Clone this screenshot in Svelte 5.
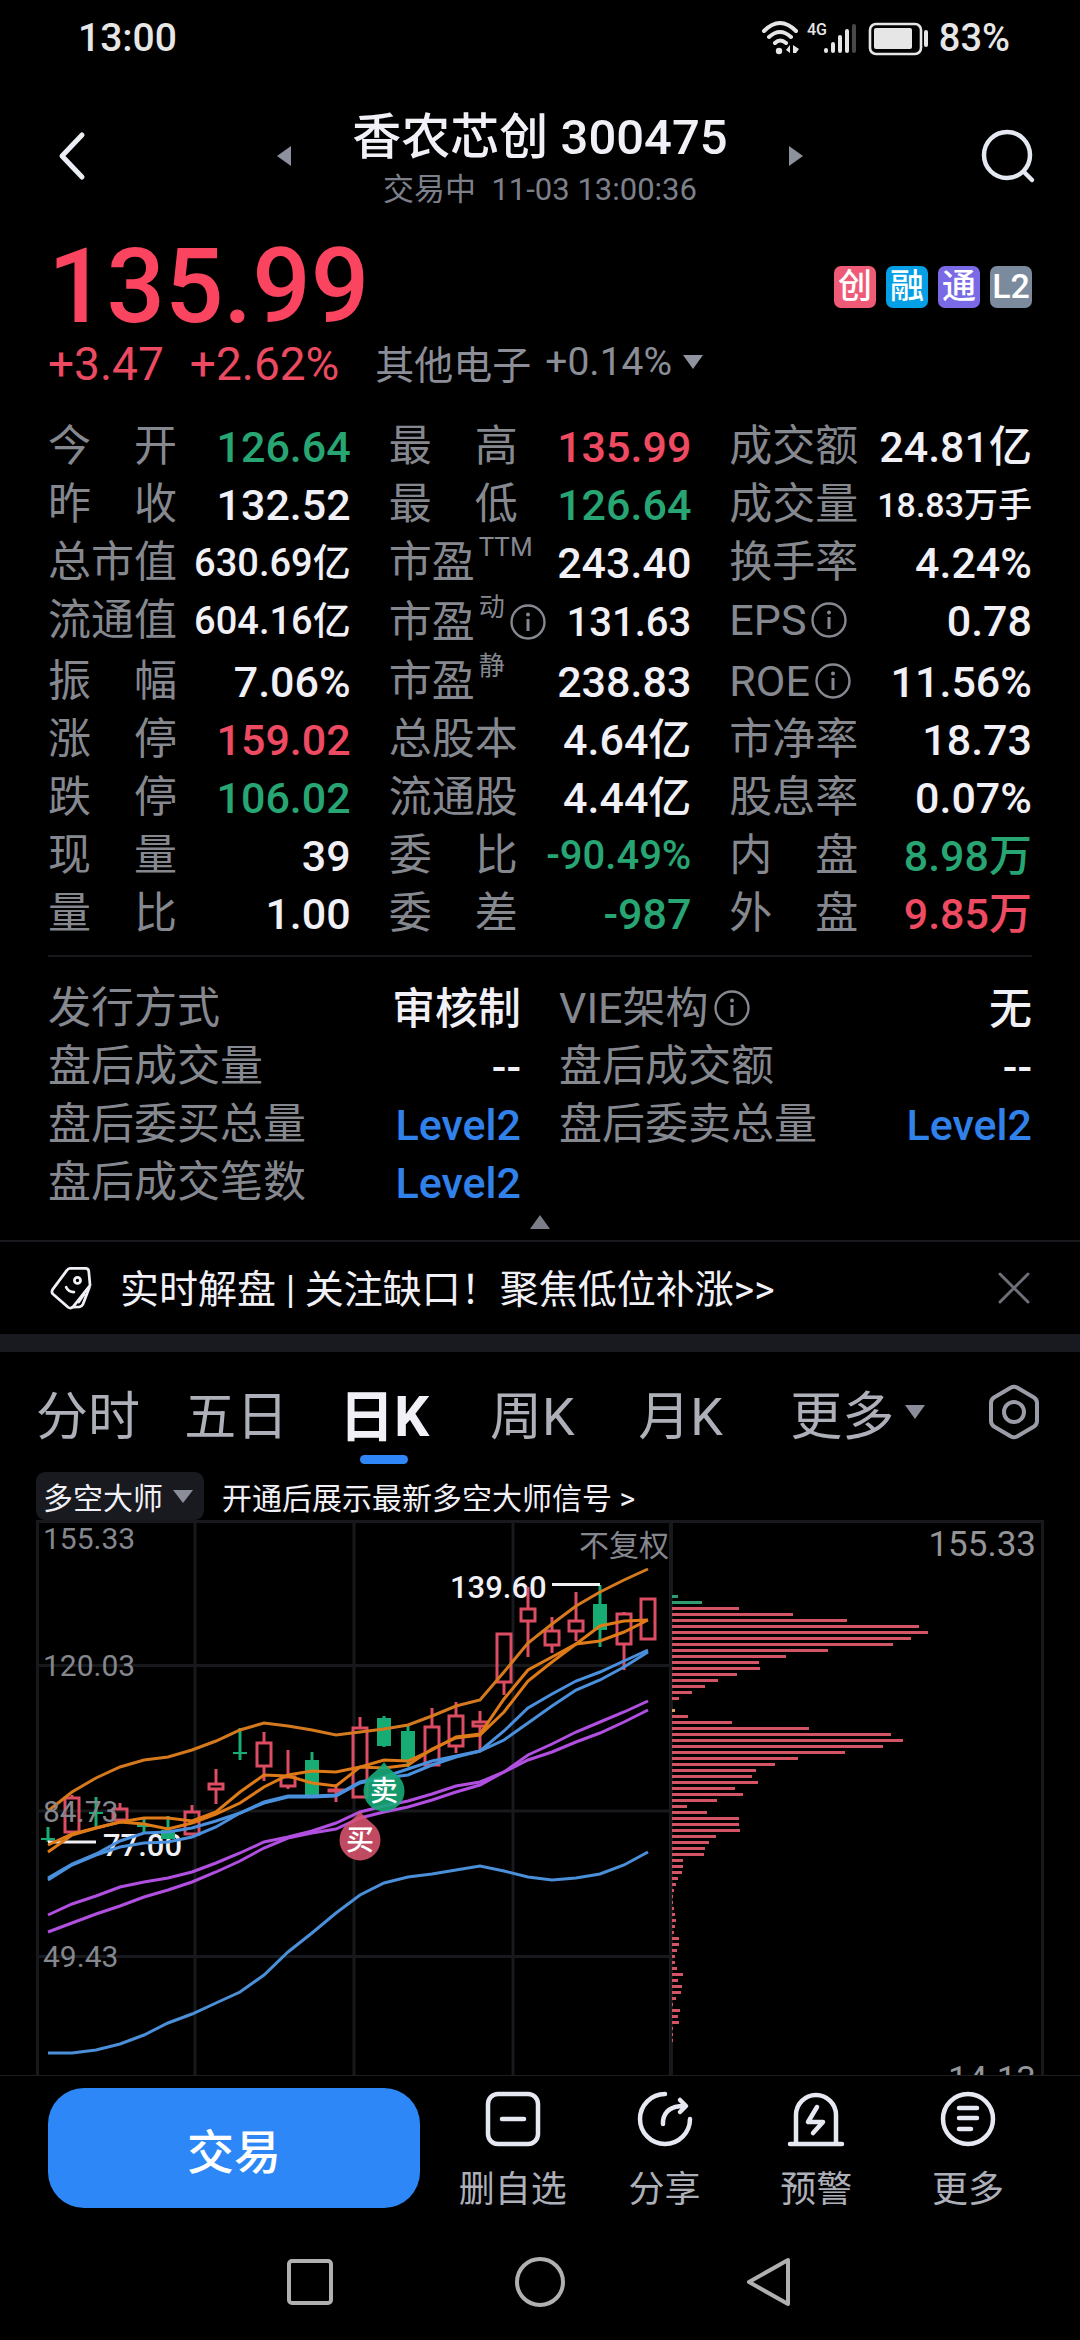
<script lang="ts">
    type Stat = {
        label: string;
        value: string;
        tone?: "up" | "down" | "link";
        size?: "md" | "sm" | "xs";
        sup?: string;
        info?: boolean;
    };

    const stats: Stat[] = [
        {label: "今 开", value: "126.64", tone: "down"},
        {label: "最 高", value: "135.99", tone: "up"},
        {label: "成交额", value: "24.81亿"},
        {label: "昨 收", value: "132.52"},
        {label: "最 低", value: "126.64", tone: "down"},
        {label: "成交量", value: "18.83万手", size: "xs"},
        {label: "总市值", value: "630.69亿", size: "sm"},
        {label: "市盈", sup: "TTM", value: "243.40"},
        {label: "换手率", value: "4.24%"},
        {label: "流通值", value: "604.16亿", size: "sm"},
        {label: "市盈", sup: "动", info: true, value: "131.63", size: "md"},
        {label: "EPS", info: true, value: "0.78"},
        {label: "振 幅", value: "7.06%"},
        {label: "市盈", sup: "静", value: "238.83"},
        {label: "ROE", info: true, value: "11.56%"},
        {label: "涨 停", value: "159.02", tone: "up"},
        {label: "总股本", value: "4.64亿"},
        {label: "市净率", value: "18.73"},
        {label: "跌 停", value: "106.02", tone: "down"},
        {label: "流通股", value: "4.44亿"},
        {label: "股息率", value: "0.07%"},
        {label: "现 量", value: "39"},
        {label: "委 比", value: "-90.49%", tone: "down", size: "md"},
        {label: "内 盘", value: "8.98万", tone: "down"},
        {label: "量 比", value: "1.00"},
        {label: "委 差", value: "-987", tone: "down"},
        {label: "外 盘", value: "9.85万", tone: "up"}
    ];

    const extras: Stat[] = [
        {label: "发行方式", value: "审核制"},
        {label: "VIE架构", info: true, value: "无"},
        {label: "盘后成交量", value: "--"},
        {label: "盘后成交额", value: "--"},
        {label: "盘后委买总量", value: "Level2", tone: "link"},
        {label: "盘后委卖总量", value: "Level2", tone: "link"},
        {label: "盘后成交笔数", value: "Level2", tone: "link"}
    ];

    const badges = [
        {text: "创", color: "red"},
        {text: "融", color: "cyan"},
        {text: "通", color: "violet"},
        {text: "L2", color: "slate"}
    ];

    const tabs = ["分时", "五日", "日K", "周K", "月K"];
    let activeTab = "日K";

    // [high, body top, body bottom, low, rising]
    const candles: [number, number, number, number, boolean][] = [
        [328, 339, 341, 343, false],
        [296, 299, 333, 333, true],
        [298, 313, 315, 328, false],
        [304, 310, 321, 323, true],
        [319, 326, 328, 333, false],
        [317, 331, 340, 340, false],
        [306, 313, 335, 335, true],
        [270, 285, 290, 305, true],
        [229, 253, 255, 261, false],
        [233, 244, 267, 282, true],
        [251, 278, 287, 290, true],
        [253, 261, 297, 297, false],
        [285, 291, 292, 303, true],
        [218, 229, 298, 298, true],
        [217, 219, 247, 248, false],
        [226, 232, 261, 268, false],
        [209, 228, 266, 266, true],
        [203, 217, 247, 254, true],
        [212, 223, 227, 252, true],
        [135, 135, 183, 196, true],
        [88, 110, 122, 158, true],
        [118, 132, 146, 154, true],
        [93, 122, 132, 142, true],
        [86, 105, 131, 148, false],
        [113, 115, 145, 171, true],
        [100, 100, 140, 140, true]
    ];

    const lines = [
        {color: "#d5791f", data: [312, 293, 279, 268, 261, 258, 251, 242, 231, 224, 227, 231, 236, 233, 230, 226, 217, 207, 201, 173, 144, 125, 107, 93, 81, 70]},
        {color: "#de7a18", data: [346, 335, 329, 323, 319, 319, 322, 313, 293, 276, 277, 284, 287, 268, 261, 262, 251, 238, 235, 200, 171, 158, 145, 142, 133, 121]},
        {color: "#de7a18", data: [353, 336, 329, 323, 325, 330, 324, 315, 304, 288, 276, 272, 273, 268, 269, 266, 250, 239, 236, 213, 182, 163, 145, 127, 122, 121]},
        {color: "#4a90dc", data: [379, 365, 355, 342, 334, 333, 329, 322, 314, 303, 297, 297, 296, 283, 278, 270, 262, 257, 252, 232, 209, 195, 182, 173, 162, 151]},
        {color: "#4a90dc", data: [381, 366, 356, 348, 344, 343, 338, 328, 314, 304, 298, 298, 297, 284, 279, 276, 266, 258, 252, 241, 224, 207, 191, 181, 168, 153]},
        {color: "#b14fe0", data: [416, 405, 397, 388, 383, 379, 373, 364, 354, 343, 338, 332, 324, 313, 307, 302, 295, 287, 283, 273, 256, 245, 233, 223, 213, 202]},
        {color: "#b14fe0", data: [433, 424, 415, 407, 398, 391, 383, 373, 362, 349, 339, 334, 330, 319, 313, 308, 301, 293, 286, 273, 261, 253, 243, 234, 223, 211]},
        {color: "#4a8fd8", data: [554, 554, 551, 545, 536, 524, 515, 504, 493, 476, 453, 434, 414, 396, 384, 378, 375, 371, 367, 372, 378, 381, 379, 375, 366, 353]}
    ];

    // chips held at each price level, top to bottom
    const chips = [
        6, 30, 67, 121, 175, 247, 256, 239, 221, 156, 114, 87, 88, 65, 46, 33, 20, 7, 0, 3,
        16, 60, 137, 219, 231, 211, 173, 126, 103, 84, 80, 86, 63, 71, 45, 15, 35, 67, 67, 68,
        44, 37, 33, 32, 11, 11, 10, 6, 4, 2, 1, 1, 2, 3, 4, 3, 2, 7, 7, 5,
        3, 3, 5, 11, 6, 10, 9, 4, 1, 8, 6, 7, 1, 1, 1
    ];

    const x = (i: number) => 48 + i * 24;
    const points = (data: number[]) => data.map((y, i) => `${x(i)},${y}`).join(" ");
    const chipColor = (i: number) => i < 2 ? "#2f9d72" : i === 19 ? "#dca368" : "#d25465";
</script>

{#snippet infoIcon()}
    <svg class="info" viewBox="0 0 36 36" aria-hidden="true">
        <circle cx="18" cy="18" r="16.5" fill="none" stroke="currentColor" stroke-width="2.4"/>
        <circle cx="18" cy="10.5" r="2" fill="currentColor"/>
        <path d="M18 15v12" stroke="currentColor" stroke-width="3"/>
    </svg>
{/snippet}

{#snippet statRow(item: Stat)}
    <div class="stat" class:tall={item.sup === "动"}>
        <dt>
            <span class:spread={item.label.includes(" ")}>{item.label}</span>
            {#if item.sup}<sup>{item.sup}</sup>{/if}
            {#if item.info}{@render infoIcon()}{/if}
        </dt>
        <dd class="{item.tone ?? ''} {item.size ?? ''}">
            {#if item.tone === "link"}<a href="#level2">{item.value}</a>{:else}{item.value}{/if}
        </dd>
    </div>
{/snippet}

<div class="page">
    <div class="status">
        <span class="clock">13:00</span>
        <svg class="signals" viewBox="0 0 170 36" aria-hidden="true">
            <g fill="none" stroke="#e6e6e6" stroke-width="4" stroke-linecap="round">
                <path d="M3 11Q19 -5 35 11M8 17Q19 7 30 17M14 23Q19 18 25 23"/>
            </g>
            <circle cx="18" cy="31" r="3.2" fill="#e6e6e6"/>
            <path d="M29 25v8l-4-3zM32 25l6 4-3 4h-3z" fill="#e6e6e6"/>
            <text x="46" y="15" font-size="16" font-weight="500" fill="#e6e6e6">4G</text>
            <g stroke="#e6e6e6" stroke-width="4" stroke-linecap="round">
                <path d="M65 30v1M72 24v7M79 17v14M86 11v20"/>
                <path d="M93 6v25" stroke="#484848"/>
            </g>
            <rect x="109" y="4" width="51" height="30" rx="6" fill="none" stroke="#e6e6e6" stroke-width="2.6"/>
            <rect x="113" y="8" width="38" height="21" rx="2" fill="#e6e6e6"/>
            <path d="M165 12v13" stroke="#e6e6e6" stroke-width="4" stroke-linecap="round"/>
        </svg>
        <span class="battery">83%</span>
    </div>

    <header>
        <button class="icon" aria-label="返回">
            <svg width="30" height="52" viewBox="0 0 30 52">
                <path d="M25 5L5 26l20 21" fill="none" stroke="#eceef5" stroke-width="5" stroke-linecap="round" stroke-linejoin="round"/>
            </svg>
        </button>
        <div class="switcher">
            <button aria-label="上一只">
                <svg width="16" height="22" viewBox="0 0 16 22"><path d="M15 1v20L1 11z" fill="#8d919d"/></svg>
            </button>
            <div class="title">
                <h1>香农芯创 300475</h1>
                <p>交易中&nbsp; 11-03 13:00:36</p>
            </div>
            <button aria-label="下一只">
                <svg width="16" height="22" viewBox="0 0 16 22"><path d="M1 1v20l14-10z" fill="#8d919d"/></svg>
            </button>
        </div>
        <button class="icon" aria-label="搜索">
            <svg width="56" height="56" viewBox="0 0 56 56" fill="none" stroke="#e4e8f1" stroke-width="4.5" stroke-linecap="round">
                <circle cx="27" cy="27" r="23"/>
                <path d="M44 44l8 8"/>
            </svg>
        </button>
    </header>

    <section class="quote">
        <div class="price-line">
            <strong>135.99</strong>
            <div class="badges">
                {#each badges as badge}
                    <span class="badge {badge.color}">{badge.text}</span>
                {/each}
            </div>
        </div>
        <div class="change-line">
            <span class="change">+3.47</span>
            <span class="change">+2.62%</span>
            <button class="sector">
                其他电子 <span>+0.14%</span>
                <svg width="22" height="16" viewBox="0 0 22 16"><path d="M1 1h20L11 15z" fill="#9094a0"/></svg>
            </button>
        </div>
        <dl class="stats">
            {#each stats as item}
                {@render statRow(item)}
            {/each}
        </dl>
        <dl class="stats extras">
            {#each extras as item}
                {@render statRow(item)}
            {/each}
        </dl>
        <button class="fold" aria-label="收起">
            <svg width="22" height="16" viewBox="0 0 22 16"><path d="M11 1l10 14H1z" fill="#7b7e88"/></svg>
        </button>
    </section>

    <aside class="notice">
        <svg width="42" height="45" viewBox="60 48 130 136" fill="none" stroke="#f0f0f6" stroke-width="8.5" stroke-linecap="round" stroke-linejoin="round">
            <path d="M122 54H170Q179 54 180 63L184 106L132 172Q124 180 116 174L69 133Q63 126 69 118L112 60Q116 54 122 54Z"/>
            <path d="M182 112L162 165Q159 172 151 173L132 174M165 134L149 158"/>
            <circle cx="145" cy="91" r="9.5"/>
            <path d="M110 112Q117 127 134 127"/>
        </svg>
        <a href="#notice">实时解盘 | 关注缺口！聚焦低位补涨&gt;&gt;</a>
        <button class="close" aria-label="关闭">
            <svg width="32" height="32" viewBox="0 0 32 32"><path d="M2 2l28 28M30 2L2 30" stroke="#6d6f78" stroke-width="3" stroke-linecap="round"/></svg>
        </button>
    </aside>

    <nav class="tabs">
        {#each tabs as tab}
            <button class:active={activeTab === tab} on:click={() => (activeTab = tab)}>{tab}</button>
        {/each}
        <button class="more">
            更多
            <svg width="22" height="16" viewBox="0 0 22 16"><path d="M1 1h20L11 15z" fill="#8b8e98"/></svg>
        </button>
        <button class="settings" aria-label="设置">
            <svg width="52" height="56" viewBox="0 0 52 56" fill="none" stroke="#9a9da7" stroke-width="4" stroke-linejoin="round">
                <path d="M23 3.500Q26 2 29 3.500L46 13.500Q49 15.500 49 19V37Q49 40.500 46 42.500L29 52.500Q26 54 23 52.500L6 42.500Q3 40.500 3 37V19Q3 15.500 6 13.500Z"/>
                <circle cx="26" cy="28" r="10"/>
            </svg>
        </button>
    </nav>

    <div class="indicator">
        <button class="chip">
            多空大师
            <svg width="22" height="15" viewBox="0 0 22 15"><path d="M1 1h20L11 14z" fill="#8b8e98"/></svg>
        </button>
        <a href="#signal">开通后展示最新多空大师信号 &gt;</a>
    </div>

    <svg class="chart" viewBox="0 21 1080 555" role="img" aria-label="日K线图">
        <g stroke="#18191d" stroke-width="3" fill="none">
            <path d="M36 22.500H1044M37.500 21V580M195 21V580M354 21V580M513 21V580M1042.500 21V580"/>
            <path d="M36 166.500H671M36 312H671M36 457.500H671"/>
            <path d="M671 21V580" stroke-width="4"/>
        </g>

        <text class="peak" x="450" y="99">139.60</text>
        <text class="peak" x="103" y="357">77.00</text>

        {#each candles as [high, top, bottom, low, rising], i}
            {#if rising}
                <path d="M{x(i)} {high}V{top}M{x(i)} {bottom}V{low}" stroke="#dc4d63" stroke-width="3"/>
                <rect x={x(i) - 7} y={top} width="14" height={bottom - top} fill="none" stroke="#dc4d63" stroke-width="3"/>
            {:else}
                <path d="M{x(i)} {high}V{low}" stroke="#17ac73" stroke-width="3"/>
                <rect x={x(i) - 7} y={top} width="14" height={bottom - top} fill="#17ac73"/>
            {/if}
        {/each}

        <path d="M48 343H96M552 85.500H600" stroke="#f0f0f5" stroke-width="3"/>

        {#each lines as line}
            <polyline points={points(line.data)} fill="none" stroke={line.color} stroke-width="3"/>
        {/each}

        <g class="scale">
            <text x="43" y="50">155.33</text>
            <text x="43" y="177">120.03</text>
            <text x="43" y="323">84.73</text>
            <text x="43" y="468">49.43</text>
            <text x="669" y="57" text-anchor="end">不复权</text>
        </g>

        <g class="marker">
            <path d="M384 263Q388 269 398 277A20.500 20.500 0 1 1 370 277Q380 269 384 263Z" fill="#16a878" fill-opacity=".9"/>
            <text x="384" y="302" text-anchor="middle">卖</text>
            <path d="M360 312Q364 318 374 326A20.500 20.500 0 1 1 346 326Q356 318 360 312Z" fill="#d9546e" fill-opacity=".88"/>
            <text x="360" y="351" text-anchor="middle">买</text>
        </g>

        {#each chips as width, i}
            <rect x="672" y={96 + i * 6} {width} height="3" fill={chipColor(i)}/>
        {/each}
        <g class="scale wide" text-anchor="end">
            <text x="1036" y="57">155.33</text>
            <text x="1036" y="592">14.13</text>
        </g>
    </svg>

    <footer>
        <button class="trade">交易</button>
        <div class="tools">
            <button>
                <svg viewBox="0 0 58 58">
                    <rect x="4" y="4" width="50" height="50" rx="10"/>
                    <path d="M18 29h22"/>
                </svg>
                删自选
            </button>
            <button>
                <svg viewBox="0 0 58 58">
                    <path d="M29 4A25 25 0 1 0 54 29"/>
                    <path d="M27 34V31Q29 16 48 16M44 10l6 6-6 6"/>
                </svg>
                分享
            </button>
            <button>
                <svg viewBox="0 0 58 58">
                    <path d="M9 53V25A20 20 0 0 1 49 25V53M3 54H55"/>
                    <path d="M30 17L21 32H36L26 43"/>
                </svg>
                预警
            </button>
            <button>
                <svg viewBox="0 0 58 58">
                    <circle cx="29" cy="29" r="25"/>
                    <path d="M20 18H38M20 28H38M20 39H32"/>
                </svg>
                更多
            </button>
        </div>
    </footer>

    <nav class="system">
        <button aria-label="最近任务">
            <svg width="52" height="52" viewBox="0 0 52 52"><rect x="5" y="5" width="42" height="42" rx="3"/></svg>
        </button>
        <button aria-label="主屏幕">
            <svg width="52" height="52" viewBox="0 0 52 52"><circle cx="26" cy="26" r="23"/></svg>
        </button>
        <button aria-label="返回上一页">
            <svg width="52" height="52" viewBox="0 0 52 52"><path d="M44 4V48L5 26Z" stroke-linejoin="round"/></svg>
        </button>
    </nav>
</div>

<style>
    :global(body) {
        margin: 0;
        background: #000;
    }

    .page {
        min-height: 100vh;
        display: flex;
        flex-direction: column;
        background: #000;
        color: #f0f0f6;
        font-family: Roboto, "Noto Sans CJK SC", sans-serif;
    }

    button {
        padding: 0;
        border: 0;
        background: none;
        color: inherit;
        font: inherit;
        cursor: pointer;
    }

    a {
        color: inherit;
        text-decoration: none;
    }

    svg {
        display: block;
        flex-shrink: 0;
    }

    .status {
        display: flex;
        align-items: center;
        height: 76px;
        padding: 0 70px 0 78px;
        color: #e6e6e6;
        font-weight: 500;
    }

    .clock {
        margin-right: auto;
        font-size: 39px;
    }

    .signals {
        width: 170px;
        height: 36px;
        margin-right: 8px;
    }

    .battery {
        font-size: 38px;
    }

    header {
        display: flex;
        align-items: center;
        justify-content: space-between;
        height: 160px;
        padding: 0 44px;
    }

    .icon {
        display: flex;
        justify-content: center;
        width: 56px;
    }

    .switcher {
        display: flex;
        align-items: center;
        gap: 60px;
    }

    .title {
        padding-top: 8px;
        text-align: center;
    }

    h1 {
        margin: 0;
        font-size: 49px;
        line-height: 60px;
        font-weight: 500;
    }

    p {
        margin: 0;
        color: #7d808a;
        font-size: 31px;
        line-height: 44px;
    }

    .quote {
        padding: 0 48px;
    }

    .price-line {
        display: flex;
        align-items: center;
        justify-content: space-between;
    }

    .price-line strong {
        color: #fb4560;
        font-size: 103px;
        line-height: 102px;
        font-weight: 500;
    }

    .badges {
        display: flex;
        gap: 10px;
    }

    .badge {
        width: 42px;
        height: 42px;
        border-radius: 7px;
        color: #fff;
        font-size: 34px;
        line-height: 40px;
        font-weight: 500;
        text-align: center;
    }

    .red {
        background: #ef5b76;
    }

    .cyan {
        background: #059fe6;
    }

    .violet {
        background: #7a6ae6;
    }

    .slate {
        background: #7b8a9c;
    }

    .change-line {
        display: flex;
        align-items: center;
        height: 52px;
    }

    .change {
        margin-right: 26px;
        color: #eb4a61;
        font-size: 46px;
    }

    .sector {
        display: flex;
        align-items: center;
        gap: 14px;
        margin-left: 10px;
        padding-bottom: 4px;
        color: #8b8e97;
        font-size: 39px;
    }

    .sector svg {
        margin-left: -4px;
    }

    .stats {
        display: grid;
        grid-template-columns: repeat(3, 1fr);
        column-gap: 38px;
        margin: 0;
        padding: 27px 0 13px;
    }

    .extras {
        grid-template-columns: repeat(2, 1fr);
        padding: 22px 0 0;
        border-top: 2px solid #17181b;
    }

    .stat {
        display: flex;
        align-items: center;
        justify-content: space-between;
        height: 58px;
        white-space: nowrap;
    }

    .tall {
        height: 61px;
    }

    dt {
        display: flex;
        align-items: center;
        color: #85888f;
        font-size: 43px;
        line-height: 58px;
    }

    dt .spread {
        width: 129px;
        text-align-last: justify;
    }

    sup {
        align-self: flex-start;
        margin-left: 4px;
        font-size: 26px;
        line-height: 28px;
    }

    .info {
        width: 36px;
        height: 36px;
        margin-left: 5px;
    }

    dd {
        margin: 0;
        padding-top: 2px;
        font-size: 43px;
        line-height: 56px;
        font-weight: 500;
    }

    .md {
        font-size: 40px;
    }

    .sm {
        font-size: 38px;
    }

    .xs {
        font-size: 34px;
    }

    .up {
        color: #ee4b62;
    }

    .down {
        color: #27a674;
    }

    .link {
        color: #3181ea;
    }

    .fold {
        display: flex;
        justify-content: center;
        width: 100%;
        height: 29px;
        padding-top: 3px;
    }

    .notice {
        display: flex;
        align-items: center;
        height: 92px;
        padding: 0 50px;
        border-top: 2px solid #18191c;
        border-bottom: 18px solid #191a1f;
        font-size: 39px;
    }

    .notice a {
        flex: 1;
        margin-left: 28px;
        padding-bottom: 5px;
    }

    .tabs {
        display: flex;
        align-items: center;
        height: 120px;
        padding: 0 40px 0 14px;
        color: #adb0b9;
        font-size: 52px;
    }

    .tabs button {
        position: relative;
        flex: 1;
        height: 120px;
    }

    .tabs .more {
        display: flex;
        align-items: center;
        justify-content: center;
        gap: 10px;
        flex: 1.4;
    }

    .tabs .settings {
        flex: none;
        margin-left: 26px;
    }

    .tabs .active {
        color: #f0f0f6;
        font-size: 55px;
        font-weight: 700;
    }

    .active::after {
        content: "";
        position: absolute;
        left: calc(50% - 24px);
        bottom: 8px;
        width: 48px;
        height: 9px;
        border-radius: 5px;
        background: #2f86f6;
    }

    .indicator {
        display: flex;
        align-items: center;
        gap: 18px;
        height: 48px;
        padding: 0 36px;
        font-size: 30px;
    }

    .chip {
        display: flex;
        align-items: center;
        gap: 9px;
        height: 48px;
        padding: 0 10px 0 7px;
        border-radius: 9px;
        background: #191a1f;
    }

    .chart {
        width: 100%;
        overflow: hidden;
    }

    .peak {
        fill: #f0f0f5;
        font-size: 31px;
        font-weight: 500;
    }

    .scale {
        fill: #85878e;
        font-size: 30px;
    }

    .wide {
        fill: #929498;
        font-size: 35px;
    }

    .marker text {
        fill: #fff;
        font-size: 28px;
        font-weight: 500;
    }

    footer {
        display: flex;
        align-items: flex-start;
        gap: 17px;
        height: 147px;
        padding: 0 36px 0 48px;
        border-top: 1px solid #1c1d20;
    }

    .trade {
        flex: 372;
        height: 120px;
        margin-top: 12px;
        border-radius: 36px;
        background: #2d87f7;
        color: #fff;
        font-size: 47px;
        font-weight: 500;
    }

    .tools {
        display: flex;
        flex: 607;
        padding-top: 14px;
    }

    .tools button {
        display: flex;
        flex: 1;
        flex-direction: column;
        align-items: center;
        gap: 16px;
        color: #adb0b8;
        font-size: 36px;
        line-height: 52px;
    }

    .tools svg {
        width: 58px;
        height: 58px;
        fill: none;
        stroke: #e6e9f1;
        stroke-width: 4.5;
        stroke-linecap: round;
        stroke-linejoin: round;
    }

    .system {
        display: flex;
        justify-content: center;
        gap: 178px;
        height: 117px;
    }

    .system svg {
        fill: none;
        stroke: #b0b0b0;
        stroke-width: 4;
    }
</style>
